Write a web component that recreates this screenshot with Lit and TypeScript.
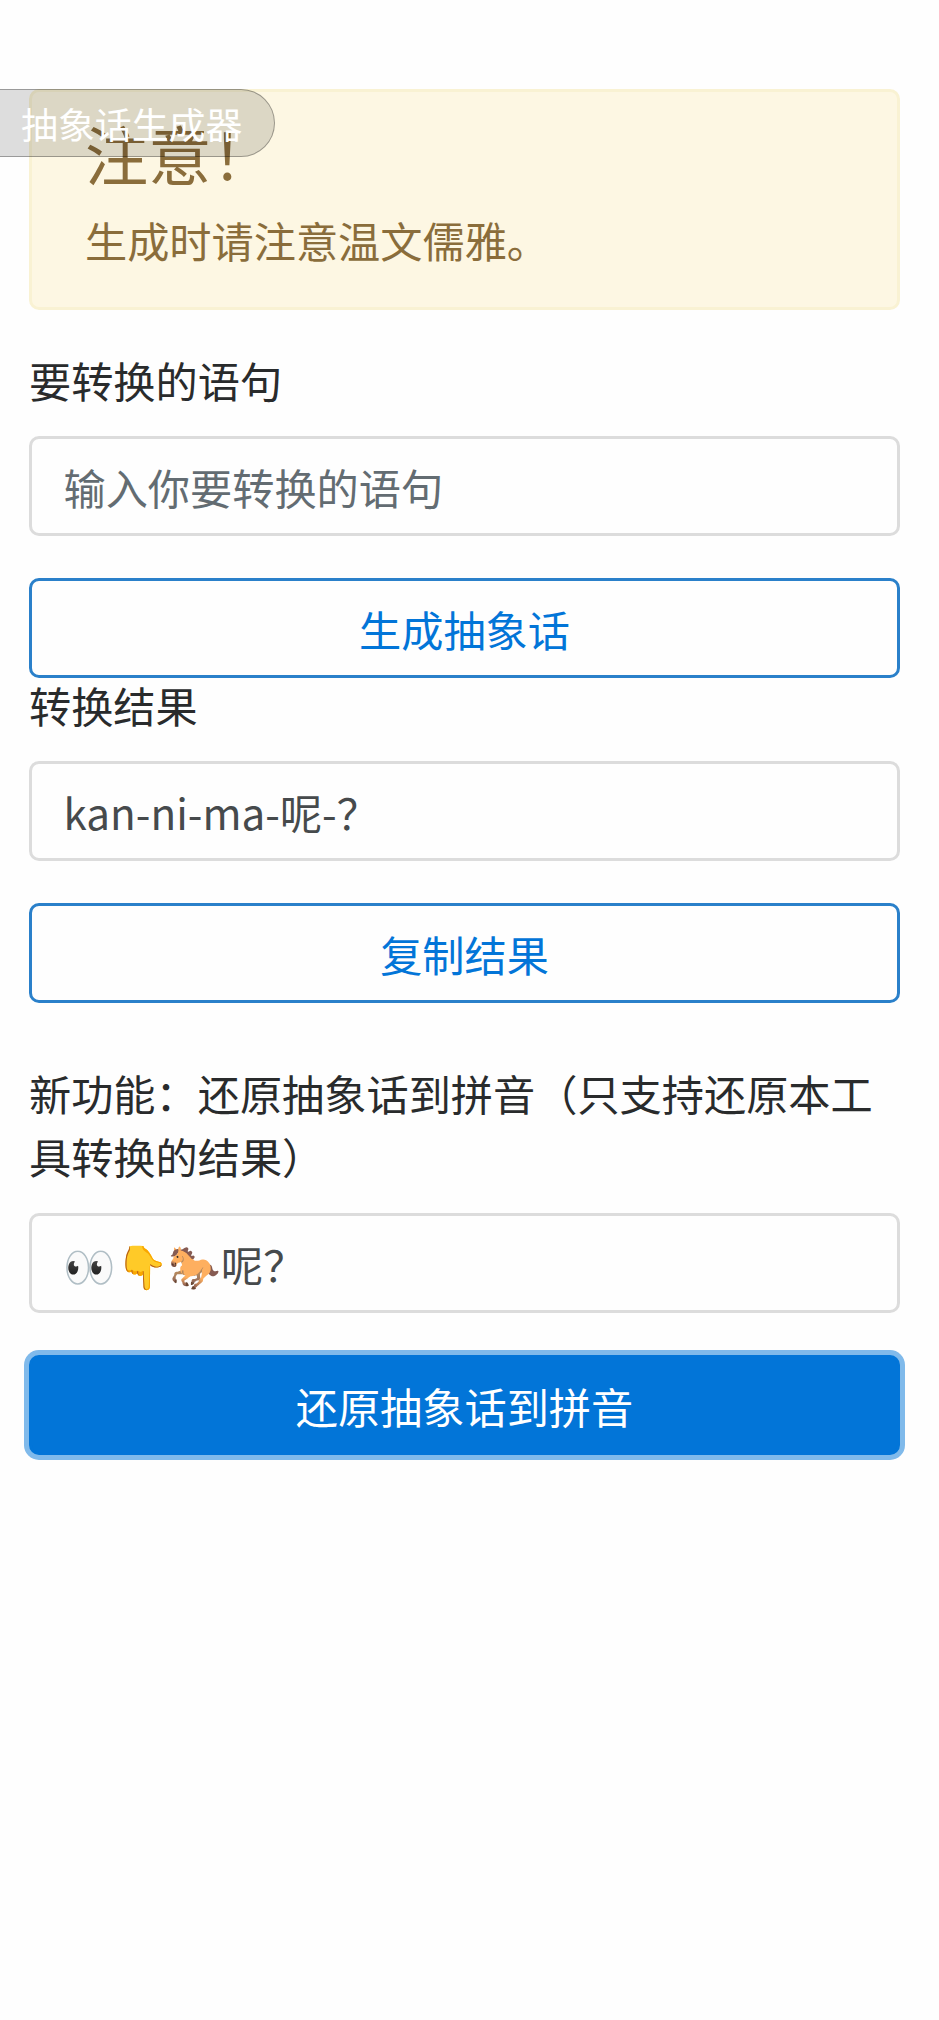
import { LitElement, html, css } from "lit";
import { customElement } from "lit/decorators.js";

@customElement("app-root")
export class AppRoot extends LitElement {
  static styles = css`
    :host {
      display: block;
      position: relative;
      box-sizing: border-box;
      min-height: 2020px;
      padding: 89px 39px 0 29px;
      background: #fefefe;
      color: #292b2c;
      font-family: "Noto Sans CJK SC", "Noto Color Emoji", sans-serif;
      font-size: 42.2px;
      line-height: 63px;
    }
    .pill {
      position: absolute;
      left: -2px;
      top: 89px;
      box-sizing: border-box;
      width: 277px;
      height: 68px;
      padding-left: 22px;
      border: 1px solid rgba(0, 0, 0, 0.3);
      border-radius: 0 34px 34px 0;
      background: rgba(0, 0, 0, 0.13);
      color: #fff;
      font-size: 36.9px;
      line-height: 66px;
      white-space: nowrap;
    }
    .alert {
      box-sizing: border-box;
      height: 221px;
      padding: 26px 53px 0 53px;
      border: 3px solid #f9f2d3;
      border-radius: 10px;
      background: #fdf7e3;
      color: #8a6d3b;
    }
    .title {
      margin: 0 0 20px;
      font-size: 63.2px;
      line-height: 70px;
      font-weight: 400;
    }
    .text {
      margin: 0;
    }
    .label {
      display: block;
    }
    .l1 { margin: 38px 0 25px; }
    .l2 { margin: -5px 0 25px; }
    .l3 { margin: 58px 0 26px; }
    .field,
    .btn {
      display: flex;
      align-items: center;
      box-sizing: border-box;
      width: 100%;
      height: 100px;
      border-radius: 10px;
      background: #fefefe;
      font: inherit;
    }
    .field {
      padding: 0 31.5px;
      border: 3px solid #dcdcdc;
      color: #464a4c;
    }
    .hint { color: #636c72; }
    .btn {
      justify-content: center;
      margin: 42px 0 0;
      padding: 0;
      border: 3px solid #2a80ca;
      color: #0275d8;
    }
    .solid {
      border-color: #0275d8;
      background: #0275d8;
      color: #fff;
      box-shadow: 0 0 0 5px rgba(2, 117, 216, 0.5);
    }
  `;

  render() {
    return html`
      <div class="alert">
        <h4 class="title">注意！</h4>
        <p class="text">生成时请注意温文儒雅。</p>
      </div>
      <label class="label l1">要转换的语句</label>
      <div class="field hint">输入你要转换的语句</div>
      <button class="btn">生成抽象话</button>
      <label class="label l2">转换结果</label>
      <div class="field">kan-ni-ma-呢-？</div>
      <button class="btn">复制结果</button>
      <label class="label l3">新功能：还原抽象话到拼音（只支持还原本工具转换的结果）</label>
      <div class="field">👀👇🐎呢？</div>
      <button class="btn solid">还原抽象话到拼音</button>
      <div class="pill">抽象话生成器</div>
    `;
  }
}
